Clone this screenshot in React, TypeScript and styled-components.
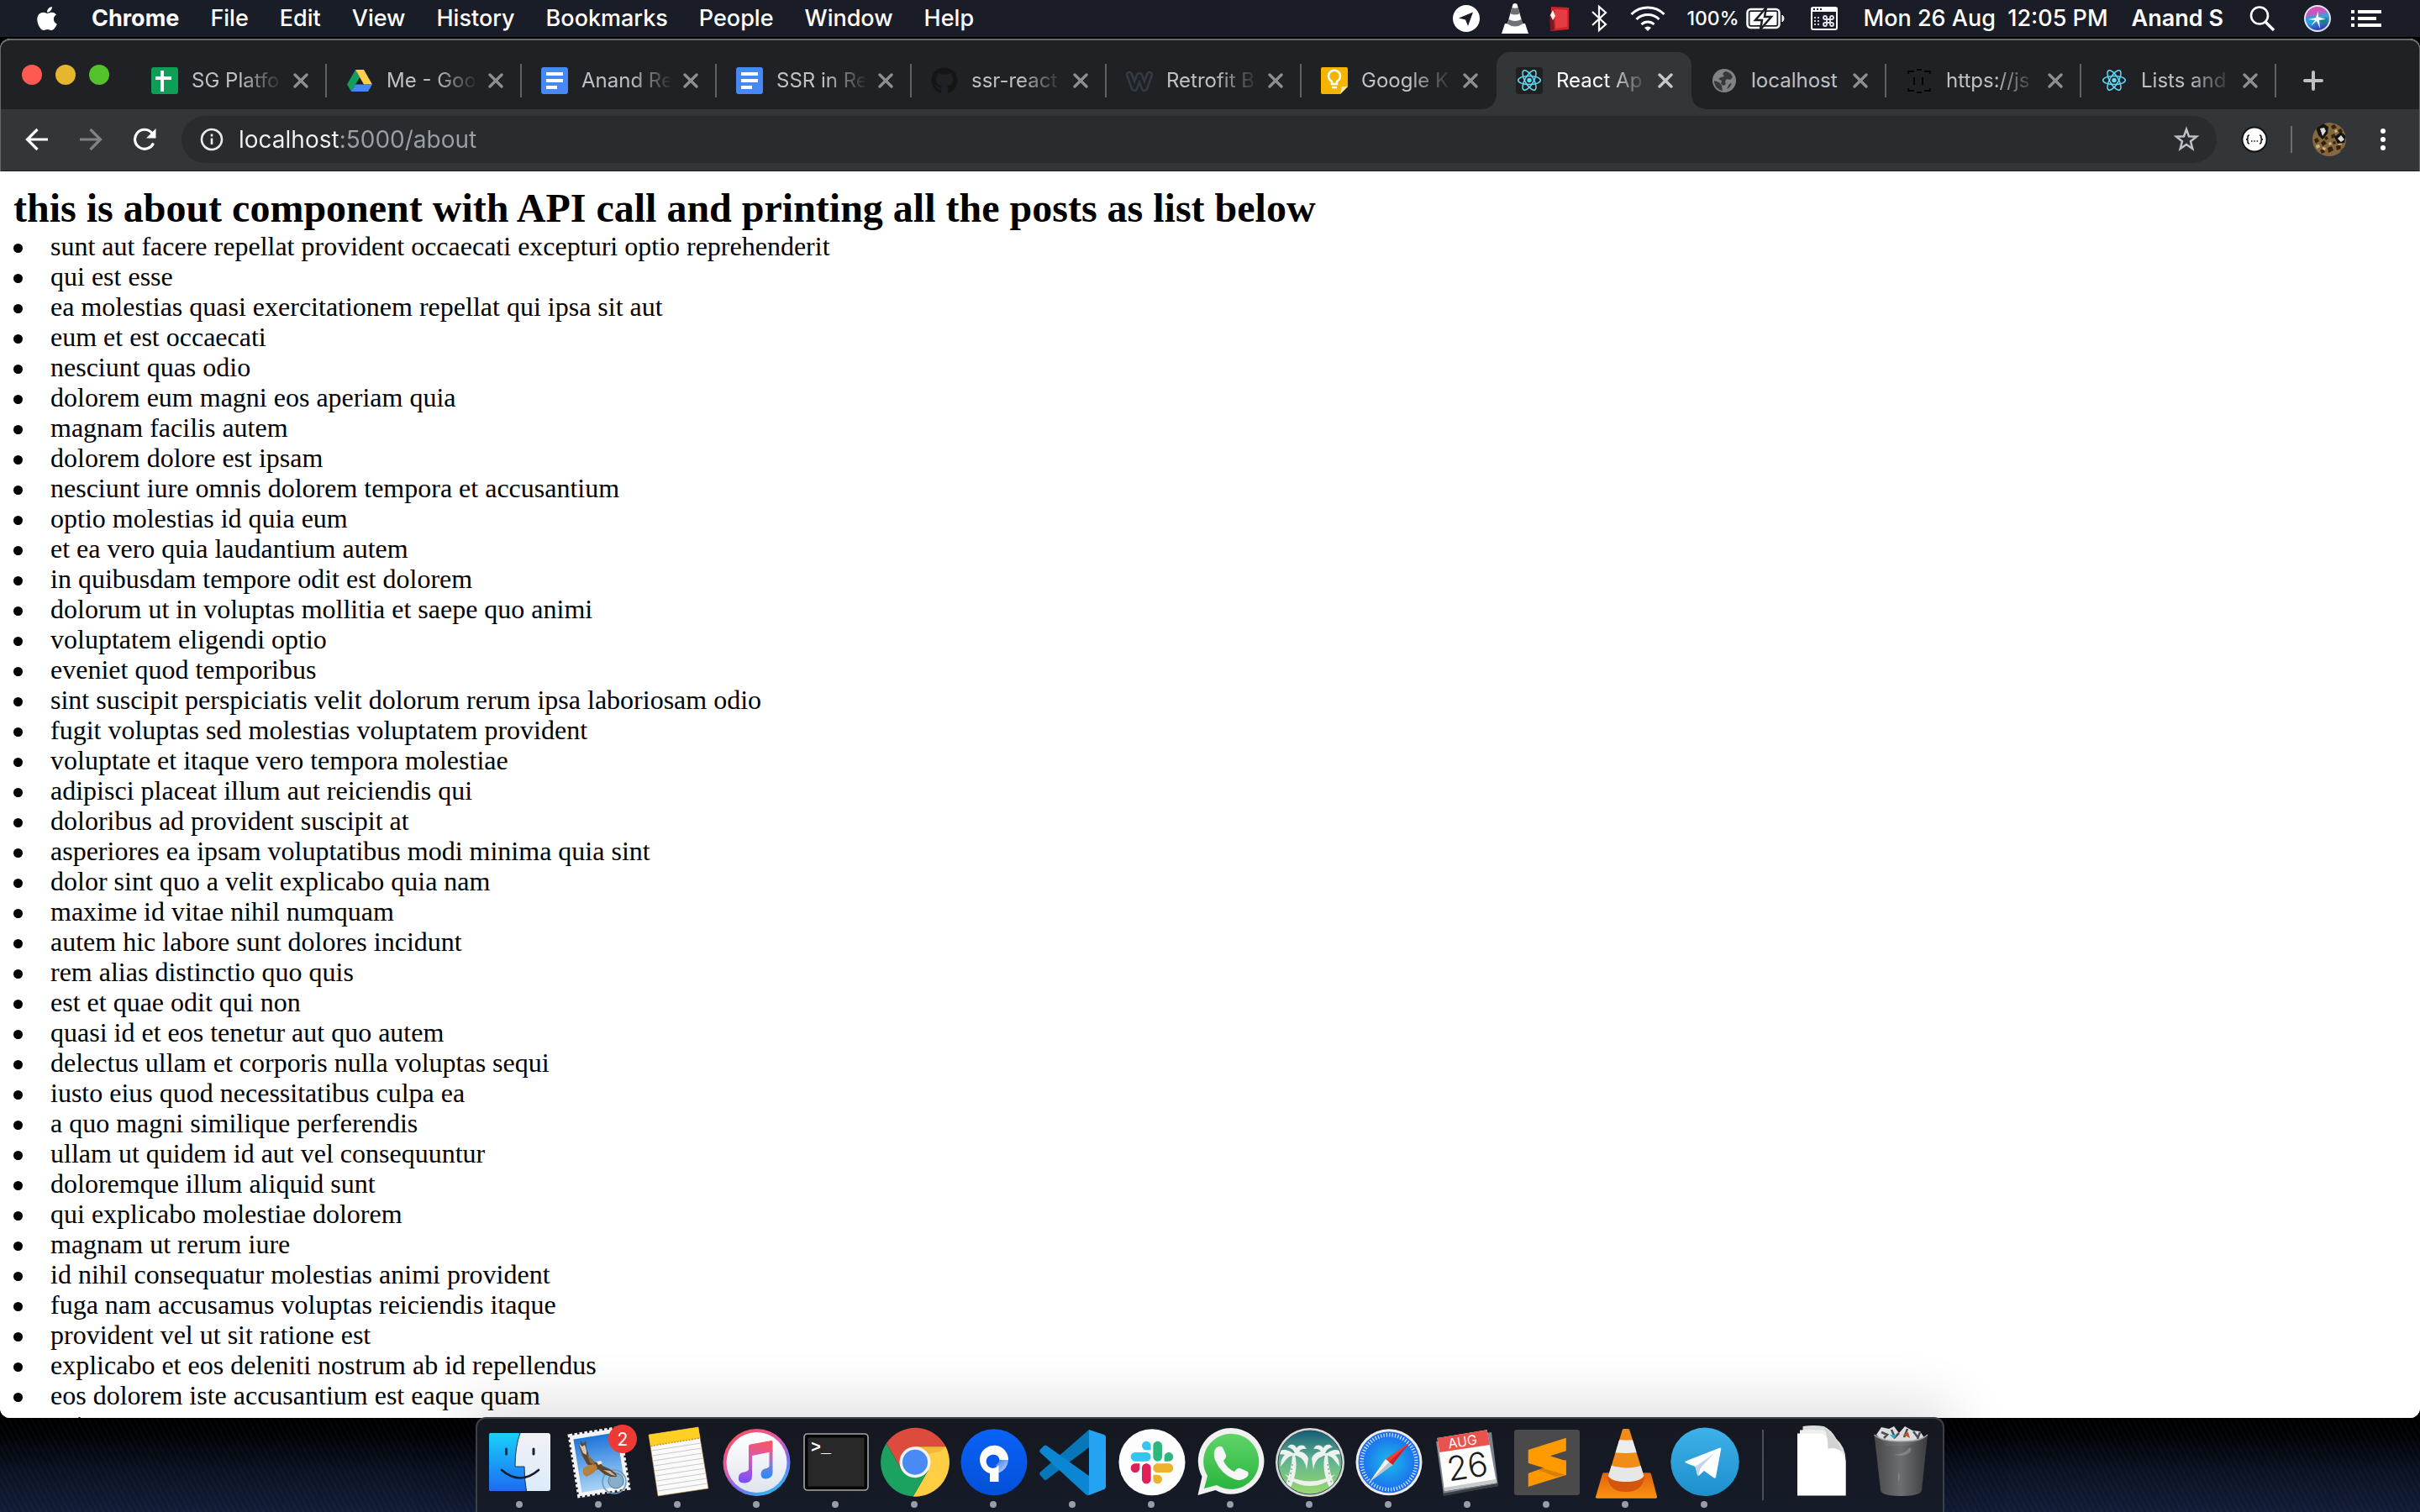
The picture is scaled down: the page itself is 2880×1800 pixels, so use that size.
import React from 'react';
import styled, { createGlobalStyle, css } from 'styled-components';
import { FaApple, FaGithub } from 'react-icons/fa';

const ui = `Inter, Roboto, "Liberation Sans", sans-serif`;
const serif = `"Liberation Serif", "Times New Roman", serif`;

const GlobalStyle = createGlobalStyle`
  *, *::before, *::after { box-sizing: border-box; }
  html, body { margin: 0; padding: 0; background: #000; }
  button { margin: 0; padding: 0; border: 0; background: none; color: inherit; font: inherit; }
  svg { display: block; flex: none; }
`;

const Desktop = styled.div`
  display: flex;
  flex-direction: column;
  height: 100vh;
  overflow: hidden;
  background: #000;
`;

/* ---------- menu bar ---------- */

const MenuBar = styled.header`
  display: flex;
  justify-content: space-between;
  align-items: center;
  flex: none;
  height: 44px;
  padding: 0 46px 0 40px;
  background: linear-gradient(90deg, #191d28, #1a1c26);
  color: #fff;
  font: 500 27px/44px ${ui};
  white-space: nowrap;
`;

const Menus = styled.nav`
  display: flex;
  align-items: center;
  gap: 37px;
`;

const MenuButton = styled.button<{ $bold?: boolean }>`
  font-weight: ${(p) => (p.$bold ? 700 : 500)};
`;

const StatusItems = styled.div`
  display: flex;
  align-items: center;
  gap: 24px;
`;

const Battery = styled.div`
  display: flex;
  align-items: center;
  gap: 8px;
  font-size: 23px;
`;

const UserName = styled.span`
  font-weight: 600;
`;

const Clock = styled.time`
  padding-right: 4px;
  white-space: pre;
`;

/* ---------- browser window ---------- */

const BrowserWindow = styled.section`
  display: flex;
  flex-direction: column;
  flex: 1;
  min-height: 0;
  margin-top: 2px;
  overflow: hidden;
  border-radius: 12px;
  background: #fff;
`;

const Frame = styled.div`
  flex: none;
  border: solid #67686b;
  border-width: 2px 1px 0;
  border-radius: 12px 12px 0 0;
  background: #202124;
`;

const TabStrip = styled.div`
  display: flex;
  align-items: center;
  height: 82px;
  padding-left: 25px;
`;

const Controls = styled.div`
  display: flex;
  gap: 16px;
  width: 131px;
  flex: none;
`;

const Control = styled.button<{ $color: string }>`
  width: 24px;
  height: 24px;
  border-radius: 50%;
  background: ${(p) => p.$color};
`;

const Tabs = styled.div`
  display: flex;
  align-self: flex-end;
  min-width: 0;
`;

const Tab = styled.div<{ $active?: boolean; $divider?: boolean }>`
  position: relative;
  display: flex;
  align-items: center;
  flex: 0 1 232px;
  width: 232px;
  height: 68px;
  padding: 0 22px 0 23px;
  ${(p) =>
    p.$divider &&
    css`
      background: linear-gradient(#5f6164, #5f6164) right center / 2px 40px no-repeat;
    `}
  ${(p) =>
    p.$active &&
    css`
      border-radius: 16px 16px 0 0;
      background: #323639;
      &::before,
      &::after {
        content: '';
        position: absolute;
        bottom: 0;
        width: 16px;
        height: 16px;
      }
      &::before {
        right: 100%;
        background: radial-gradient(circle at 0 0, transparent 15px, #323639 16px);
      }
      &::after {
        left: 100%;
        background: radial-gradient(circle at 100% 0, transparent 15px, #323639 16px);
      }
    `}
`;

const TabTitle = styled.button<{ $active?: boolean; $fade?: boolean }>`
  flex: 1;
  min-width: 0;
  margin: 0 16px;
  overflow: hidden;
  color: ${(p) => (p.$active ? '#fff' : '#bdc1c6')};
  font: 400 24px/32px ${ui};
  text-align: left;
  white-space: nowrap;
  ${(p) =>
    p.$fade &&
    css`
      mask-image: linear-gradient(90deg, #000 56%, transparent 104%);
    `}
`;

const IconButton = styled.button<{ $w: number; $tone?: string }>`
  display: flex;
  align-items: center;
  justify-content: center;
  flex: none;
  width: ${(p) => p.$w}px;
  color: ${(p) => p.$tone || '#fff'};
`;

const Toolbar = styled.div`
  display: flex;
  align-items: center;
  height: 74px;
  padding: 8px 23px 9px 11px;
  border-bottom: 1px solid #1c1d20;
  background: #323639;
`;

const Omnibox = styled.label`
  display: flex;
  align-items: center;
  flex: 1;
  height: 56px;
  margin: 0 26px 0 12px;
  padding: 0 20px 0 22px;
  border-radius: 28px;
  background: #282c2f;
`;

const UrlInput = styled.input`
  flex: 1;
  min-width: 0;
  height: 40px;
  margin: 0 18px;
  padding: 0;
  border: 0;
  outline: 0;
  color: #9aa0a6;
  font: 400 28px/40px ${ui};
  background: linear-gradient(90deg, #f1f3f4 120px, #9aa0a6 120px);
  background-clip: text;
  -webkit-text-fill-color: transparent;
`;

const Actions = styled.div`
  display: flex;
  align-items: center;
  gap: 24px;
`;

const Divider = styled.span`
  width: 2px;
  height: 32px;
  background: #6d7073;
`;

/* ---------- page ---------- */

const Page = styled.main`
  flex: 1;
  min-height: 0;
  padding: 16px;
  overflow: hidden;
  background: #fff;
  color: #000;
  font: 32px/36px ${serif};
`;

const Heading = styled.h2`
  margin: 0;
  font: bold 48px/55px ${serif};
`;

const Posts = styled.ul`
  margin: 0;
  padding: 0;
  list-style: none;
`;

const Post = styled.li`
  display: flex;
  align-items: center;
  gap: 33px;
  &::before {
    content: '';
    width: 11px;
    height: 11px;
    margin-top: 4px;
    border-radius: 50%;
    background: #000;
  }
`;

/* ---------- dock ---------- */

const DockArea = styled.footer`
  position: relative;
  display: flex;
  justify-content: center;
  flex: none;
  height: 112px;
  background: repeating-linear-gradient(62deg, rgba(120, 150, 210, 0.035) 0 2px, transparent 2px 6px),
    linear-gradient(#000 0, #010204 20px, #0b1222 64px, #121c36 112px);
`;

const Dock = styled.div`
  display: flex;
  margin-top: -1px;
  padding: 0 3px;
  border: 2px solid #3d4047;
  border-bottom: 0;
  border-radius: 12px 12px 0 0;
  background: linear-gradient(#15181f, #161b29);
  box-shadow: 0 0 70px 12px rgba(0, 0, 0, 0.14);
`;

const DockItem = styled.button`
  display: flex;
  flex-direction: column;
  width: 94px;
`;

const Running = styled.span`
  align-self: center;
  width: 8px;
  height: 8px;
  border-radius: 50%;
  background: #9a9caa;
`;

const DockDivider = styled.span`
  width: 2px;
  height: 84px;
  margin: 13px 22px 0;
  background: #4b4e57;
`;

/* ---------- small drawings ---------- */

const Atom = ({ tile = false }: { tile?: boolean }) => (
  <svg width="32" height="32" viewBox="0 0 32 32">
    {tile && <rect width="32" height="32" rx="3" fill="#20211f" />}
    <g fill="none" stroke="#61dafb" strokeWidth="1.5">
      <ellipse cx="16" cy="15.5" rx="13.3" ry="5.1" />
      <ellipse cx="16" cy="15.5" rx="13.3" ry="5.1" transform="rotate(60 16 15.5)" />
      <ellipse cx="16" cy="15.5" rx="13.3" ry="5.1" transform="rotate(120 16 15.5)" />
    </g>
    <circle cx="16" cy="15.5" r="2.7" fill="#61dafb" />
  </svg>
);

const Sheets = () => (
  <svg width="32" height="32" viewBox="0 0 32 32">
    <rect width="32" height="32" rx="3" fill="#0f9d58" />
    <path d="M11 4h4v7h9v4h-9v14h-4V15H5v-4h6z" fill="#fff" />
  </svg>
);

const Drive = () => (
  <svg width="32" height="32" viewBox="0 0 32 32">
    <path d="M11 3 16 12 6 29 1 20.500Z" fill="#11a05c" />
    <path d="M11 3h10l10 17.500H21z" fill="#ffcf48" />
    <path d="M11 20.500h20L26 29H6z" fill="#4587f5" />
  </svg>
);

const Docs = () => (
  <svg width="32" height="32" viewBox="0 0 32 32">
    <rect width="32" height="32" rx="3" fill="#4688f4" />
    <path d="M6 6h20v4H6zM6 14h20v4H6zM6 22h13v4H6z" fill="#fff" />
  </svg>
);

const Weebly = () => (
  <svg width="32" height="32" viewBox="0 0 32 32" fill="none" strokeLinejoin="round" strokeLinecap="round">
    <path d="M4 9l6 16 6-15 6 15 6-16" stroke="#343a45" strokeWidth="8.500" />
    <path d="M4 9l6 16 6-15 6 15 6-16" stroke="#202124" strokeWidth="3.400" />
  </svg>
);

const Keep = () => (
  <svg width="32" height="32" viewBox="0 0 32 32">
    <path d="M2 0h28a2 2 0 0 1 2 2v21l-9 9H2a2 2 0 0 1-2-2V2a2 2 0 0 1 2-2z" fill="#f4b400" />
    <path d="M32 23h-7l-2 9z" fill="#fbe7a8" />
    <path d="M13 20v-3a7 7 0 1 1 6 0v3zM13 24h6" fill="none" stroke="#fff" strokeWidth="2.500" />
  </svg>
);

const Globe = () => (
  <svg width="32" height="32" viewBox="0 0 32 32">
    <circle cx="16" cy="16" r="14" fill="#808285" />
    <path
      d="M17 5c4 0 8 3 9 7l-3 3-4-1-2 3 1 3-3 2-3-2 1-4-4-2 3-2 4-1-2-3zM4 16l6 2 3 4 1 6C8 27 4 22 4 16zM22 20l3-1c-1 3-3 6-6 7z"
      fill="#36383b"
    />
  </svg>
);

const Braces = () => (
  <svg width="32" height="32" viewBox="0 0 32 32" fill="none" stroke="#050505" strokeWidth="2">
    <path d="M3 8V5h7M13 3h6M22 5h7v3M3 25v3h7M13 30h6M22 28h7v-3M10 12v9M20 12v9" />
  </svg>
);

const Github = () => <FaGithub size={32} color="#151614" />;

const CloseGlyph = ({ active }: { active?: boolean }) => (
  <svg width="18" height="18" viewBox="0 0 18 18" stroke={active ? '#c6c8cb' : '#8c8e92'} strokeWidth="3.400" strokeLinecap="round">
    <path d="M2 2l14 14M16 2L2 16" />
  </svg>
);

type TabInfo = { title: string; icon: React.ReactNode; divider?: boolean; active?: boolean; fade?: boolean };

const tabs: TabInfo[] = [
  { title: 'SG Platfo', icon: <Sheets />, divider: true, fade: true },
  { title: 'Me - Goo', icon: <Drive />, divider: true, fade: true },
  { title: 'Anand Re', icon: <Docs />, divider: true, fade: true },
  { title: 'SSR in Re', icon: <Docs />, divider: true, fade: true },
  { title: 'ssr-react', icon: <Github />, divider: true, fade: true },
  { title: 'Retrofit B', icon: <Weebly />, divider: true, fade: true },
  { title: 'Google K', icon: <Keep />, fade: true },
  { title: 'React Ap', icon: <Atom tile />, active: true, fade: true },
  { title: 'localhost', icon: <Globe />, divider: true },
  { title: 'https://js', icon: <Braces />, divider: true, fade: true },
  { title: 'Lists and', icon: <Atom />, divider: true, fade: true },
];

const menus = ['File', 'Edit', 'View', 'History', 'Bookmarks', 'People', 'Window', 'Help'];

const posts = [
  'sunt aut facere repellat provident occaecati excepturi optio reprehenderit',
  'qui est esse',
  'ea molestias quasi exercitationem repellat qui ipsa sit aut',
  'eum et est occaecati',
  'nesciunt quas odio',
  'dolorem eum magni eos aperiam quia',
  'magnam facilis autem',
  'dolorem dolore est ipsam',
  'nesciunt iure omnis dolorem tempora et accusantium',
  'optio molestias id quia eum',
  'et ea vero quia laudantium autem',
  'in quibusdam tempore odit est dolorem',
  'dolorum ut in voluptas mollitia et saepe quo animi',
  'voluptatem eligendi optio',
  'eveniet quod temporibus',
  'sint suscipit perspiciatis velit dolorum rerum ipsa laboriosam odio',
  'fugit voluptas sed molestias voluptatem provident',
  'voluptate et itaque vero tempora molestiae',
  'adipisci placeat illum aut reiciendis qui',
  'doloribus ad provident suscipit at',
  'asperiores ea ipsam voluptatibus modi minima quia sint',
  'dolor sint quo a velit explicabo quia nam',
  'maxime id vitae nihil numquam',
  'autem hic labore sunt dolores incidunt',
  'rem alias distinctio quo quis',
  'est et quae odit qui non',
  'quasi id et eos tenetur aut quo autem',
  'delectus ullam et corporis nulla voluptas sequi',
  'iusto eius quod necessitatibus culpa ea',
  'a quo magni similique perferendis',
  'ullam ut quidem id aut vel consequuntur',
  'doloremque illum aliquid sunt',
  'qui explicabo molestiae dolorem',
  'magnam ut rerum iure',
  'id nihil consequatur molestias animi provident',
  'fuga nam accusamus voluptas reiciendis itaque',
  'provident vel ut sit ratione est',
  'explicabo et eos deleniti nostrum ab id repellendus',
  'eos dolorem iste accusantium est eaque quam',
  'enim quo cumque',
];

/* ---------- status icons ---------- */

const StatusTelegram = () => (
  <svg width="34" height="32" viewBox="0 0 34 32">
    <circle cx="16" cy="16" r="16" fill="#fff" />
    <path d="M7 15.500 24 8.500 18 25 15 17.500z" fill="#1a1c26" />
  </svg>
);

const StatusVlc = () => (
  <svg width="32" height="38" viewBox="0 0 32 38">
    <path d="M4 25h24l4 12H0z" fill="#fff" />
    <path d="M13.500 2Q16 0 18.500 2L25 25Q16 31 7 25z" fill="#fff" />
    <path d="M12.300 6q3.700 1.500 7.400 0l2 7q-5.700 3-11.400 0z" fill="#6f7278" />
    <path d="M8.500 20q7.500 4 15 0l1.600 5.500q-9 6-18.200 0z" fill="#6f7278" />
  </svg>
);

const StatusBook = () => (
  <svg width="26" height="32" viewBox="0 0 26 32">
    <path d="M3 2l21 1v26L2 31z" fill="#c9232c" />
    <path d="M7 5l15 1v20L8 28z" fill="#e33c43" />
    <path d="M1 12l4-5 2 22-5 2z" fill="#7d1a20" />
    <path d="M5 6l3 7-3 5-3-6z" fill="#fff2ea" />
  </svg>
);

const StatusBluetooth = () => (
  <svg width="22" height="34" viewBox="0 0 22 34" fill="none" stroke="#fff" strokeWidth="2.200">
    <path d="M2 9l16 15-8 7V3l8 7L2 25" />
  </svg>
);

const StatusWifi = () => (
  <svg width="44" height="32" viewBox="0 0 44 32" fill="none" stroke="#fff" strokeWidth="3">
    <path d="M2.500 11a28 28 0 0 1 39 0M8.500 17a19.500 19.500 0 0 1 27 0M14.500 23a11 11 0 0 1 15 0" />
    <path d="M22 31l-4-4a6 6 0 0 1 8 0z" fill="#fff" stroke="none" />
  </svg>
);

const StatusBattery = () => (
  <svg width="48" height="26" viewBox="0 0 48 26">
    <rect x="1.500" y="2" width="38" height="22" rx="4" fill="none" stroke="#fff" strokeWidth="2.500" />
    <rect x="4.500" y="5" width="32" height="16" rx="1" fill="#fff" />
    <path d="M43 9q4 4 0 8z" fill="#fff" stroke="#fff" />
    <path d="M24 0L11 15h8l-2 11 13-15h-8z" fill="#fff" stroke="#1a1c26" strokeWidth="2.500" />
  </svg>
);

const StatusKeyboard = () => (
  <svg width="44" height="28" viewBox="0 0 44 28">
    <rect x="6" y="1" width="30" height="26" rx="2" fill="none" stroke="#fff" strokeWidth="2" />
    <path d="M5 1h32v5H5z" fill="#fff" />
    <path d="M8 3h2M12 3h2M16 3h2" stroke="#1a1c26" strokeWidth="2" />
    <path d="M9 13h2M13 13h2M9 17h2M13 17h2M9 21h2M13 21h2" stroke="#c9cad0" strokeWidth="2" />
    <path
      d="M24 15h4v4h-4zM24 15v-2a2 2 0 1 0-2 2zM28 15v-2a2 2 0 1 1 2 2zM24 19v2a2 2 0 1 1-2-2zM28 19v2a2 2 0 1 0 2-2z"
      fill="none"
      stroke="#e4e5ea"
      strokeWidth="1.800"
    />
  </svg>
);

const StatusSearch = () => (
  <svg width="48" height="30" viewBox="0 0 48 30" fill="none" stroke="#fff" strokeWidth="2.600">
    <circle cx="19" cy="11.500" r="10" />
    <path d="M26 19l10 10" strokeWidth="3.400" />
  </svg>
);

const StatusSiri = () => (
  <svg width="32" height="32" viewBox="0 0 32 32">
    <defs>
      <linearGradient id="siri" x1="0" y1="0" x2="0.3" y2="1">
        <stop offset="0" stopColor="#e8469c" />
        <stop offset="0.400" stopColor="#c05ac4" />
        <stop offset="0.600" stopColor="#2aa9dd" />
        <stop offset="1" stopColor="#3440b8" />
      </linearGradient>
    </defs>
    <circle cx="16" cy="16" r="15" fill="url(#siri)" stroke="#dfe6f2" strokeWidth="2" />
    <path d="M2 16q6-6 12-2l-5 10q-6-2-7-8z" fill="#2c9fe0" />
    <path d="M27 15q1 5-3 8l-6-5z" fill="#1b7f74" />
    <path d="M5 17l9-2 3-8v7l9 3-8 1 1 10-4-9-7 6 5-7z" fill="#f3fbff" />
  </svg>
);

const StatusList = () => (
  <svg width="36" height="20" viewBox="0 0 36 20" fill="#fff">
    <path d="M0 0h4v4H0zM8 0h28v4H8zM0 8h4v4H0zM8 8h22v4H8zM0 16h4v4H0zM8 16h28v4H8z" />
  </svg>
);

/* ---------- dock icons, each on a 94 x 98 canvas ---------- */

const Art = ({ children }: { children: React.ReactNode }) => (
  <svg width="94" height="98" viewBox="0 1 94 98">
    {children}
  </svg>
);

const FinderArt = () => (
  <Art>
    <defs>
      <linearGradient id="fa" x1="0" y1="0" x2="0" y2="1">
        <stop offset="0" stopColor="#19d0fb" />
        <stop offset="1" stopColor="#1d6bf3" />
      </linearGradient>
      <linearGradient id="fb" x1="0" y1="0" x2="0" y2="1">
        <stop offset="0" stopColor="#f1f1f5" />
        <stop offset="1" stopColor="#dcebfb" />
      </linearGradient>
    </defs>
    <rect x="11" y="18" width="73" height="69" rx="3" fill="url(#fb)" />
    <path d="M48 18H14q-3 0-3 3v63q0 3 3 3h41.500Q53 72 53 58H42Q42 34 48 18z" fill="url(#fa)" />
    <path d="M48 18Q42 34 42 58h11q0 15 2.500 29" fill="none" stroke="#20324d" strokeWidth="1" />
    <path d="M31.500 37v6M64 37v6" stroke="#1a2233" strokeWidth="3" strokeLinecap="round" />
    <path d="M26 62q22 19 44 0" fill="none" stroke="#151c2b" strokeWidth="2.600" strokeLinecap="round" />
  </Art>
);

const MailArt = () => (
  <Art>
    <defs>
      <linearGradient id="sky" x1="0" y1="0" x2="0" y2="1">
        <stop offset="0" stopColor="#1f74dc" />
        <stop offset="1" stopColor="#a9d5f5" />
      </linearGradient>
    </defs>
    <g transform="rotate(-9 48 52)">
      <rect x="18" y="16" width="60" height="73" fill="#f4f4f4" stroke="#f4f4f4" strokeWidth="4" strokeDasharray="3.500 2.500" />
      <rect x="22" y="21" width="52" height="64" fill="url(#sky)" />
    </g>
    <circle cx="66" cy="76" r="14" fill="none" stroke="#6f97b6" strokeWidth="1.500" />
    <circle cx="68" cy="75" r="9" fill="#86aecb" stroke="#55799a" strokeWidth="1" />
    <path d="M23 30l3 3 0-6 3 4 3-4 1 9 3 10 7 7 6 0 3 4 9 4 7 5 1 4-7 0-8-3-7-6-6 2-3-4-5-5-5-9z" fill="#5f4529" />
    <path d="M29 60l7-4 8-1 2 5-5 6-8 4-4-3z" fill="#b5813f" />
    <path d="M24 31l4 3 3-2 2 7 0 5-4-2z" fill="#cfc8bb" />
    <path d="M34 44l3 9 6 4-2-7z" fill="#8d6b3d" />
    <path d="M45 52l5-1 2 3-5 2z" fill="#efe3cf" />
    <path d="M53 62l10 6 5 1-7-6z" fill="#c4b8a6" />
    <circle cx="76" cy="25" r="17" fill="#ed3a35" />
    <text x="76" y="32.500" fill="#fff" fontFamily={ui} fontSize="21" textAnchor="middle">
      2
    </text>
  </Art>
);

const NotesArt = () => (
  <Art>
    <path d="M13 20l59-9 12 73-60 9z" fill="#fafafa" stroke="#b98c3c" strokeWidth="0.600" />
    <path d="M13 20l59-9 2 13-58.500 9.500z" fill="#ffcf24" />
    <path d="M15.500 33.500L74 24" stroke="#c98f12" strokeWidth="1.500" strokeDasharray="2 1.500" />
    <g stroke="#c9c9c9" strokeWidth="1">
      {[0, 1, 2, 3, 4, 5, 6, 7, 8].map((i) => (
        <path key={i} d={`M${16.5 + i} ${39 + i * 6}l58.500-9`} />
      ))}
    </g>
  </Art>
);

const MusicArt = () => (
  <Art>
    <defs>
      <linearGradient id="ring" x1="0.2" y1="0" x2="0.8" y2="1">
        <stop offset="0" stopColor="#fd4f56" />
        <stop offset="0.400" stopColor="#e05bb0" />
        <stop offset="0.650" stopColor="#7d6bf0" />
        <stop offset="1" stopColor="#20c7f6" />
      </linearGradient>
      <linearGradient id="disc" x1="0" y1="0" x2="0" y2="1">
        <stop offset="0" stopColor="#fff" />
        <stop offset="1" stopColor="#dfe4ee" />
      </linearGradient>
      <linearGradient id="note" gradientUnits="userSpaceOnUse" x1="50" y1="28" x2="44" y2="76">
        <stop offset="0" stopColor="#fa5560" />
        <stop offset="0.450" stopColor="#d45ab8" />
        <stop offset="1" stopColor="#7c50f8" />
      </linearGradient>
      <linearGradient id="stem" gradientUnits="userSpaceOnUse" x1="62" y1="36" x2="62" y2="72">
        <stop offset="0" stopColor="#f25a78" />
        <stop offset="0.500" stopColor="#8a78d8" />
        <stop offset="1" stopColor="#1f8cf5" />
      </linearGradient>
    </defs>
    <circle cx="47.500" cy="53" r="40" fill="url(#ring)" />
    <circle cx="47.500" cy="53" r="36" fill="url(#disc)" />
    <path d="M38 33q0-1 2-1.500l25-4.500q1.500 0 1.500 1.500V40L42 45v24q0 8-8.500 8.500T26 71q0-6 7-6.500 4-1 5-3z" fill="url(#note)" />
    <path d="M62.500 40l4-1v26q0 7-8 7.500-6 0-6-5.500 0-6 7-7 3-1 3-3z" fill="url(#stem)" />
  </Art>
);

const TerminalArt = () => (
  <Art>
    <rect x="10" y="19" width="76" height="67" rx="4" fill="#050505" stroke="#a4a7a9" strokeWidth="1.600" />
    <rect x="14.500" y="23.500" width="67" height="58" fill="#282828" />
    <text x="18" y="41" fill="#fff" fontFamily={`"Liberation Mono", monospace`} fontWeight="700" fontSize="20">
      {'>_'}
    </text>
  </Art>
);

const ChromeArt = () => (
  <Art>
    <g transform="translate(48 52.700)">
      <path d="M-34.200-22.500A41 41 0 0 1 36.600-18.400H0L-15.900 9.200z" fill="#dd4b3e" />
      <path d="M36.600-18.400A41 41 0 0 1-2.400 40.900L15.900 9.200 0-18.400z" fill="#ffce43" />
      <path d="M-2.400 40.900A41 41 0 0 1-34.200-22.500L-15.900 9.200H15.900z" fill="#1ba260" />
      <path d="M0-18.400H36.600L30-13 16-10z" fill="#e0a52c" opacity="0.500" />
      <circle r="18.500" fill="#f4f4f4" />
      <circle r="15" fill="#4a8af4" />
    </g>
  </Art>
);

const SourceTreeArt = () => (
  <Art>
    <defs>
      <linearGradient id="st" x1="0" y1="0" x2="0" y2="1">
        <stop offset="0" stopColor="#0a62f8" />
        <stop offset="1" stopColor="#0350d8" />
      </linearGradient>
      <linearGradient id="stq" x1="0" y1="0" x2="1" y2="1">
        <stop offset="0" stopColor="#2c72ea" />
        <stop offset="1" stopColor="#cfe0fc" />
      </linearGradient>
    </defs>
    <circle cx="48" cy="52.700" r="39.500" fill="url(#st)" />
    <path d="M53.500 65.500A17 17 0 0 0 65 50H48z" fill="url(#stq)" />
    <path d="M65 50A17 17 0 1 0 43 66v10h10.500V56A8 8 0 1 1 54.500 50z" fill="#fff" />
    <circle cx="48" cy="50" r="6.200" fill="#0859ea" />
  </Art>
);

const CodeArt = () => (
  <Art>
    <path d="M67 14v21L16.500 73.500q-2 1-3.500-.5L8.700 68q-1-2 .3-3.500z" fill="#0877b9" />
    <path d="M8.700 41q-1-2 .3-3.500l4.500-4.300q1.500-1.200 3.500 0L67 69v23q-2 .5-4-1z" fill="#0b86d2" />
    <path d="M67 14l18 6q2 1 2 3v59q0 2-2 3l-18 7z" fill="#23a3f2" />
  </Art>
);

const SlackArt = () => (
  <Art>
    <circle cx="48" cy="52.700" r="39.500" fill="#fdfdfd" />
    <g transform="translate(22.700 27.700) scale(0.412)">
      <path
        d="M25.800 77.600c0 7.100-5.800 12.900-12.900 12.900S0 84.700 0 77.600s5.800-12.900 12.900-12.900h12.900v12.900zm6.500 0c0-7.100 5.800-12.900 12.900-12.900s12.900 5.800 12.900 12.900v32.300c0 7.100-5.800 12.900-12.900 12.900s-12.900-5.800-12.900-12.900V77.600z"
        fill="#e01e5a"
      />
      <path
        d="M45.200 25.800c-7.100 0-12.900-5.800-12.900-12.900S38.100 0 45.200 0s12.900 5.800 12.900 12.900v12.900H45.200zm0 6.500c7.100 0 12.900 5.800 12.900 12.900s-5.800 12.900-12.900 12.900H12.900C5.800 58.100 0 52.300 0 45.200s5.800-12.900 12.900-12.900h32.300z"
        fill="#36c5f0"
      />
      <path
        d="M97 45.200c0-7.100 5.800-12.900 12.900-12.900s12.900 5.800 12.900 12.900-5.800 12.900-12.900 12.900H97V45.200zm-6.500 0c0 7.100-5.800 12.900-12.900 12.900s-12.900-5.800-12.900-12.900V12.900C64.700 5.800 70.500 0 77.600 0s12.900 5.800 12.900 12.900v32.300z"
        fill="#2eb67d"
      />
      <path
        d="M77.600 97c7.100 0 12.900 5.800 12.900 12.900s-5.800 12.900-12.900 12.900-12.900-5.800-12.900-12.900V97h12.900zm0-6.500c-7.100 0-12.900-5.800-12.900-12.900s5.800-12.900 12.900-12.900h32.300c7.100 0 12.900 5.800 12.900 12.900s-5.800 12.900-12.900 12.900H77.600z"
        fill="#ecb22e"
      />
    </g>
  </Art>
);

const WhatsAppArt = () => (
  <Art>
    <defs>
      <linearGradient id="wa" x1="0" y1="0" x2="0" y2="1">
        <stop offset="0" stopColor="#5fd468" />
        <stop offset="1" stopColor="#2ab540" />
      </linearGradient>
    </defs>
    <path d="M8.500 92l5-22a39.300 39.300 0 1 1 16 16z" fill="#f1f1f1" />
    <path d="M16 84l4-15a33 33 0 1 1 11 11z" fill="url(#wa)" />
    <path
      d="M30 36q4-4 8-1l4 9q1 3-3 7 4 9 13 13 4-5 7-4l9 4q2 4-2 7-6 5-14 2-16-6-23-23-3-9 1-14z"
      fill="#f6f6f6"
    />
  </Art>
);

const Palm = () => (
  <g>
    <path d="M30 44q5 18-6 41l-6-3q8-20 9-37z" fill="#edf2ee" />
    <path
      d="M30 42Q28 36 21 35l3-3q6-1 8 4 3-5 9-3l3 4q-6-1-9 3 7 0 11 8l-2 14q-1-13-12-17-7-1-12 4l-7 9q0-10 5-14-6-2-12 2 4-9 13-8 5 1 9 4z"
      fill="#edf2ee"
    />
    <path d="M27 55l-2 12M25 70l-3 8" stroke="#79b08f" strokeWidth="1.500" strokeDasharray="2 3" />
  </g>
);

const PalmArt = () => (
  <Art>
    <defs>
      <linearGradient id="pa" x1="0" y1="0" x2="0" y2="1">
        <stop offset="0" stopColor="#155c78" />
        <stop offset="0.450" stopColor="#5fb292" />
        <stop offset="1" stopColor="#9bd96e" />
      </linearGradient>
      <clipPath id="pc">
        <circle cx="48" cy="53" r="37.500" />
      </clipPath>
    </defs>
    <circle cx="48" cy="53" r="41" fill="#d6d8d8" />
    <circle cx="48" cy="53" r="38" fill="url(#pa)" stroke="#2c4a48" />
    <g clipPath="url(#pc)">
      <Palm />
      <g transform="translate(96 0) scale(-1 1)">
        <Palm />
      </g>
      <path d="M18 67q30 17 60 0-12 14-30 14T18 67z" fill="#edf2ee" />
    </g>
  </Art>
);

const SafariArt = () => (
  <Art>
    <defs>
      <radialGradient id="sa">
        <stop offset="0" stopColor="#19bcea" />
        <stop offset="1" stopColor="#1d68ee" />
      </radialGradient>
    </defs>
    <circle cx="48" cy="52.700" r="39.500" fill="#ececec" />
    <circle cx="48" cy="52.700" r="36.500" fill="url(#sa)" />
    <circle cx="48" cy="52.700" r="32.500" fill="none" stroke="#d6ecfd" strokeWidth="4.500" strokeDasharray="1.200 2.204" />
    <path d="M72 30L44 49l8 7z" fill="#f23c36" />
    <path d="M72 30L48 52.700l4 3.500z" fill="#c3272b" />
    <path d="M25 76L44 49l8 7z" fill="#f4f4f4" />
    <path d="M25 76l23-23.300 4 3.500z" fill="#bcc4cb" />
  </Art>
);

const CalendarArt = () => (
  <Art>
    <path d="M10 28l9 64 65-11-8-64z" fill="#7d828c" />
    <path d="M18 90l66-12v3L19 93z" fill="#3b3e45" />
    <path d="M11.500 24l59.200-9.700L82 77l-62 10z" fill="#fdfdfd" />
    <path d="M20 87l62-10-1-4-61.500 10z" fill="#c9cacc" />
    <path d="M11.500 24l59.200-9.700L74 32l-59.700 9z" fill="#ea524d" />
    <g transform="rotate(-9 46 50)" fontFamily={ui} textAnchor="middle">
      <text x="45" y="33.500" fill="#fff" fontSize="16">
        AUG
      </text>
      <text x="46" y="72" fill="#1d1d1f" fontSize="40" fontWeight="300">
        26
      </text>
    </g>
  </Art>
);

const SublimeArt = () => (
  <Art>
    <rect x="9" y="14" width="78" height="78" rx="3" fill="#4a4a4a" />
    <path d="M25.700 66l45-16v18l-45 14z" fill="#ff9800" />
    <path d="M43 60l27.800 8-12 2-21-8z" fill="#d97f05" />
    <path d="M70.800 23.700v15.600l-19 6 19 6V68l-45.100-14.300V38z" fill="#ff9a00" />
  </Art>
);

const VlcArt = () => (
  <Art>
    <defs>
      <linearGradient id="vl" x1="0" y1="0" x2="0" y2="1">
        <stop offset="0" stopColor="#e0620e" />
        <stop offset="1" stopColor="#fb9310" />
      </linearGradient>
      <clipPath id="cone">
        <path d="M43.500 15q0-2 2-2h5q2 0 2 2L69.300 69q-4 7-21.300 7t-21-7z" />
      </clipPath>
    </defs>
    <path d="M21 65.300h55q1.500 0 2 1.500l7 27q.3 2-1.500 2h-70q-1.800 0-1.500-2l8-27z" fill="url(#vl)" />
    <path d="M26 70q2 18 22 18t22-18z" fill="#d4560d" />
    <g clipPath="url(#cone)">
      <rect x="20" y="10" width="56" height="70" fill="#f08c17" />
      <path d="M20 24q28 5 56 0v14q-28 8-56 0z" fill="#eceded" />
      <path d="M20 53q28 13 56 0v30H20z" fill="#e6e7e9" />
    </g>
  </Art>
);

const TelegramArt = () => (
  <Art>
    <defs>
      <linearGradient id="tg" x1="0" y1="0" x2="0" y2="1">
        <stop offset="0" stopColor="#3db1ea" />
        <stop offset="1" stopColor="#1e8fcb" />
      </linearGradient>
    </defs>
    <circle cx="48" cy="52.300" r="40.700" fill="url(#tg)" />
    <path d="M25 51.500l41-16q1.500 0 1.200 1.500L61 70.500q-.8 2-2.500.8L47 63l-6 5.500q-1.500.8-2-.8L36.500 58 25 53.500q-1-1 0-2z" fill="#fcfdff" />
    <path d="M36.500 58L58 43 42.500 60l-2 8.500q-1 0-1.500-1z" fill="#c4d4ea" />
  </Art>
);

const FilesArt = () => (
  <Art>
    <path d="M24.500 10q13-2 25 0 9 4 15 15 11 10 11 25v42H24.500z" fill="#dedede" />
    <path d="M21 14.500q12-1 27 0 9 4 15 15 10 8 12 20v42H21z" fill="#efefef" />
    <path d="M18 18.500h28q10 2 11 16 15 2 18.500 17v41H18z" fill="#fff" />
    <path d="M49 10q5 8 5.500 27 7-3 17 3Q63 22 49 10z" fill="#d2d2d2" />
  </Art>
);

const TrashArt = () => (
  <Art>
    <defs>
      <linearGradient id="tr" x1="0" y1="0" x2="1" y2="0">
        <stop offset="0" stopColor="#484a4b" />
        <stop offset="0.500" stopColor="#707274" />
        <stop offset="1" stopColor="#3c3e40" />
      </linearGradient>
    </defs>
    <path d="M18 20l6-9 9 2 6-3 6 8 7-8 9 5 9 1 6 9-20 8H30z" fill="#dcdddf" />
    <path d="M24 17l7 3-4 4M36 14l4 9 5-5M55 13l-4 10M62 16l6 8M70 17l-3 8" stroke="#4b4d52" strokeWidth="2.500" fill="none" />
    <path d="M34 20h8l-3 5z" fill="#2fb0c8" />
    <path d="M50 20l6-3 2 7z" fill="#c9542b" />
    <path d="M15.500 20q8 8 32 8t31.500-8l-7 66q-1 7-24.500 7T23 86z" fill="url(#tr)" opacity="0.960" />
    <path d="M15.500 20q8 8 32 8t31.500-8" fill="none" stroke="#a0a2a4" strokeWidth="1.500" />
    <path d="M38 43q12 2 20-8 4 4-3 8t-17 0zM44 65q4 4 0 12" fill="#9b9d9f" opacity="0.500" />
  </Art>
);

const dockApps: { name: string; art: React.ReactNode }[] = [
  { name: 'Finder', art: <FinderArt /> },
  { name: 'Mail', art: <MailArt /> },
  { name: 'Notes', art: <NotesArt /> },
  { name: 'Music', art: <MusicArt /> },
  { name: 'Terminal', art: <TerminalArt /> },
  { name: 'Chrome', art: <ChromeArt /> },
  { name: 'Sourcetree', art: <SourceTreeArt /> },
  { name: 'Code', art: <CodeArt /> },
  { name: 'Slack', art: <SlackArt /> },
  { name: 'WhatsApp', art: <WhatsAppArt /> },
  { name: 'Palms', art: <PalmArt /> },
  { name: 'Safari', art: <SafariArt /> },
  { name: 'Calendar', art: <CalendarArt /> },
  { name: 'Sublime Text', art: <SublimeArt /> },
  { name: 'VLC', art: <VlcArt /> },
  { name: 'Telegram', art: <TelegramArt /> },
];

const Avatar = () => (
  <svg width="40" height="40" viewBox="0 0 40 40">
    <defs>
      <clipPath id="av">
        <circle cx="20" cy="20" r="20" />
      </clipPath>
    </defs>
    <g clipPath="url(#av)">
      <rect width="40" height="40" fill="#86683f" />
      <path
        d="M2 20l4-2 2 4-4 3zM10 24l4-3 3 4-5 3zM22 4l4-2 3 4-5 2zM18 30l5-2 2 5-6 3zM28 28l5-2 1 5-5 2zM9 33l4-2 2 4-4 2zM22 15l4-2 2 4-5 2zM33 34l4-4v6zM30 9l4-2 2 4-4 1zM14 18l3-2 2 3-3 2zM24 23l3-1 1 3-3 1z"
        fill="#33220f"
      />
      <path d="M4 27l4-1 1 3-4 2zM19 24l3-1 1 3-3 1zM30 24l4-1 1 3-4 1zM26 9l3-1 1 3-3 1zM12 29l4 1-1 3-3-1z" fill="#cfb47c" />
      <path d="M4 6l9-5 6 4-1 8-6 7-5-5z" fill="#141414" />
      <path d="M9 7l5-1 2 4-4 6z" fill="#dcdcdc" />
      <path d="M26 17l8-6 6 5-2 8-8 1z" fill="#141414" />
      <path d="M30 19l4-4 4 5-4 3z" fill="#dcdcdc" />
    </g>
  </svg>
);

export default function App() {
  return (
    <Desktop>
      <GlobalStyle />
      <MenuBar>
        <Menus>
          <MenuButton aria-label="Apple menu">
            <FaApple size={32} />
          </MenuButton>
          <MenuButton $bold>Chrome</MenuButton>
          {menus.map((m) => (
            <MenuButton key={m}>{m}</MenuButton>
          ))}
        </Menus>
        <StatusItems>
          <StatusTelegram />
          <StatusVlc />
          <StatusBook />
          <StatusBluetooth />
          <StatusWifi />
          <Battery>
            <span>100%</span>
            <StatusBattery />
          </Battery>
          <StatusKeyboard />
          <Clock>{'Mon 26 Aug  12:05 PM'}</Clock>
          <UserName>Anand S</UserName>
          <StatusSearch />
          <StatusSiri />
          <StatusList />
        </StatusItems>
      </MenuBar>

      <BrowserWindow>
        <Frame>
          <TabStrip>
            <Controls>
              <Control $color="#ff5a52" aria-label="Close window" />
              <Control $color="#e6b72c" aria-label="Minimise window" />
              <Control $color="#54c22b" aria-label="Zoom window" />
            </Controls>
            <Tabs>
              {tabs.map((t, i) => (
                <Tab key={i} $active={t.active} $divider={t.divider}>
                  {t.icon}
                  <TabTitle $active={t.active} $fade={t.fade}>
                    {t.title}
                  </TabTitle>
                  <IconButton $w={18} aria-label={`Close ${t.title}`}>
                    <CloseGlyph active={t.active} />
                  </IconButton>
                </Tab>
              ))}
              <IconButton $w={88} $tone="#bdc1c6" aria-label="New tab">
                <svg width="24" height="24" viewBox="0 0 24 24" stroke="currentColor" strokeWidth="4" strokeLinecap="round">
                  <path d="M12 2v20M2 12h20" />
                </svg>
              </IconButton>
            </Tabs>
          </TabStrip>
          <Toolbar>
            <IconButton $w={64} aria-label="Back">
              <svg width="28" height="28" viewBox="0 0 28 28" fill="none" stroke="currentColor" strokeWidth="3.200">
                <path d="M27 14H3M14.500 2L2.500 14l12 12" />
              </svg>
            </IconButton>
            <IconButton $w={64} $tone="#808386" aria-label="Forward">
              <svg width="28" height="28" viewBox="0 0 28 28" fill="none" stroke="currentColor" strokeWidth="3.200">
                <path d="M1 14h24M13.500 2l12 12-12 12" />
              </svg>
            </IconButton>
            <IconButton $w={64} aria-label="Reload">
              <svg width="28" height="28" viewBox="0 0 28 28" fill="none" stroke="currentColor" strokeWidth="3.200">
                <path d="M24.500 18.500A11.500 11.500 0 1 1 22.500 6l2 2.500" />
                <path d="M27.500 1v11.500H16z" fill="currentColor" stroke="none" />
              </svg>
            </IconButton>
            <Omnibox>
              <svg width="28" height="28" viewBox="0 0 28 28" fill="none" stroke="#e8eaed" strokeWidth="2.600">
                <circle cx="14" cy="14" r="12" />
                <path d="M14 12.500V20M14 7.500v3" />
              </svg>
              <UrlInput aria-label="Address" defaultValue="localhost:5000/about" />
              <IconButton as="span" $w={32} $tone="#bdc1c6">
                <svg width="32" height="32" viewBox="0 0 32 32" fill="none" stroke="currentColor" strokeWidth="2.500">
                  <path d="M16 4l3 8.300 9 .4-7 5.600 2.300 8.700-7.300-5-7.300 5L11 18.300 4 12.700l9-.4z" />
                </svg>
              </IconButton>
            </Omnibox>
            <Actions>
              <IconButton $w={38} aria-label="JSON viewer">
                <svg width="32" height="32" viewBox="0 0 32 32" fill="none" stroke="#111" strokeWidth="1.800">
                  <circle cx="16" cy="16" r="14.500" fill="#fff" />
                  <path d="M10 11q-2 0-2 2v1.500q0 1.500-2 1.500 2 0 2 1.500V19q0 2 2 2M22 11q2 0 2 2v1.500q0 1.500 2 1.500-2 0-2 1.500V19q0 2-2 2" strokeWidth="1.500" />
                  <path d="M12 18h1.500M15.300 18h1.500M18.600 18h1.500" strokeWidth="1.500" />
                </svg>
              </IconButton>
              <Divider />
              <IconButton $w={40} aria-label="Profile">
                <Avatar />
              </IconButton>
              <IconButton $w={40} aria-label="Browser menu">
                <svg width="6" height="26" viewBox="0 0 6 26" fill="currentColor">
                  <circle cx="3" cy="3" r="3" />
                  <circle cx="3" cy="13" r="3" />
                  <circle cx="3" cy="23" r="3" />
                </svg>
              </IconButton>
            </Actions>
          </Toolbar>
        </Frame>
        <Page>
          <Heading>this is about component with API call and printing all the posts as list below</Heading>
          <Posts>
            {posts.map((p) => (
              <Post key={p}>{p}</Post>
            ))}
          </Posts>
        </Page>
      </BrowserWindow>

      <DockArea>
        <Dock>
          {dockApps.map((a) => (
            <DockItem key={a.name} aria-label={a.name}>
              {a.art}
              <Running />
            </DockItem>
          ))}
          <DockDivider />
          <DockItem aria-label="Documents">
            <FilesArt />
          </DockItem>
          <DockItem aria-label="Trash">
            <TrashArt />
          </DockItem>
        </Dock>
      </DockArea>
    </Desktop>
  );
}
